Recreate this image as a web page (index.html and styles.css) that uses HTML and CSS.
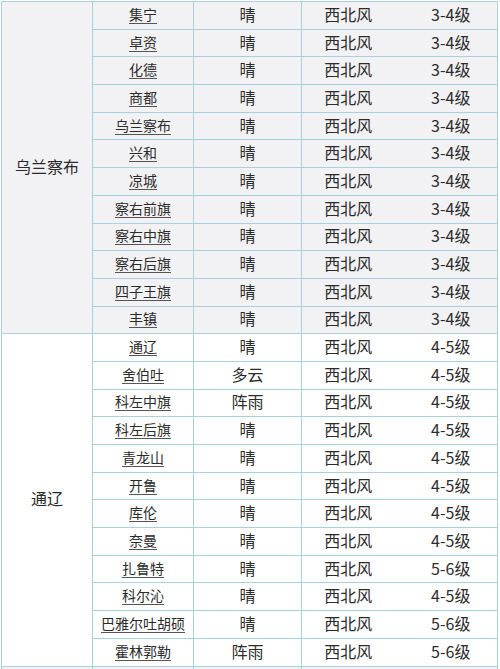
FILE: index.html
```html
<!DOCTYPE html>
<html lang="zh-CN">
<head>
<meta charset="utf-8">
<title>天气</title>
<link rel="stylesheet" href="styles.css">
</head>
<body>
<div class="table">
  <div class="group grey g1">乌兰察布</div>
  <div class="cell grey city"><a href="#">集宁</a></div><div class="cell grey">晴</div><div class="cell grey wind"><span>西北风</span><span>3-4级</span></div>
  <div class="cell grey city"><a href="#">卓资</a></div><div class="cell grey">晴</div><div class="cell grey wind"><span>西北风</span><span>3-4级</span></div>
  <div class="cell grey city"><a href="#">化德</a></div><div class="cell grey">晴</div><div class="cell grey wind"><span>西北风</span><span>3-4级</span></div>
  <div class="cell grey city"><a href="#">商都</a></div><div class="cell grey">晴</div><div class="cell grey wind"><span>西北风</span><span>3-4级</span></div>
  <div class="cell grey city"><a href="#">乌兰察布</a></div><div class="cell grey">晴</div><div class="cell grey wind"><span>西北风</span><span>3-4级</span></div>
  <div class="cell grey city"><a href="#">兴和</a></div><div class="cell grey">晴</div><div class="cell grey wind"><span>西北风</span><span>3-4级</span></div>
  <div class="cell grey city"><a href="#">凉城</a></div><div class="cell grey">晴</div><div class="cell grey wind"><span>西北风</span><span>3-4级</span></div>
  <div class="cell grey city"><a href="#">察右前旗</a></div><div class="cell grey">晴</div><div class="cell grey wind"><span>西北风</span><span>3-4级</span></div>
  <div class="cell grey city"><a href="#">察右中旗</a></div><div class="cell grey">晴</div><div class="cell grey wind"><span>西北风</span><span>3-4级</span></div>
  <div class="cell grey city"><a href="#">察右后旗</a></div><div class="cell grey">晴</div><div class="cell grey wind"><span>西北风</span><span>3-4级</span></div>
  <div class="cell grey city"><a href="#">四子王旗</a></div><div class="cell grey">晴</div><div class="cell grey wind"><span>西北风</span><span>3-4级</span></div>
  <div class="cell grey city"><a href="#">丰镇</a></div><div class="cell grey">晴</div><div class="cell grey wind"><span>西北风</span><span>3-4级</span></div>

  <div class="group white g2">通辽</div>
  <div class="cell white city"><a href="#">通辽</a></div><div class="cell white">晴</div><div class="cell white wind"><span>西北风</span><span>4-5级</span></div>
  <div class="cell white city"><a href="#">舍伯吐</a></div><div class="cell white">多云</div><div class="cell white wind"><span>西北风</span><span>4-5级</span></div>
  <div class="cell white city"><a href="#">科左中旗</a></div><div class="cell white">阵雨</div><div class="cell white wind"><span>西北风</span><span>4-5级</span></div>
  <div class="cell white city"><a href="#">科左后旗</a></div><div class="cell white">晴</div><div class="cell white wind"><span>西北风</span><span>4-5级</span></div>
  <div class="cell white city"><a href="#">青龙山</a></div><div class="cell white">晴</div><div class="cell white wind"><span>西北风</span><span>4-5级</span></div>
  <div class="cell white city"><a href="#">开鲁</a></div><div class="cell white">晴</div><div class="cell white wind"><span>西北风</span><span>4-5级</span></div>
  <div class="cell white city"><a href="#">库伦</a></div><div class="cell white">晴</div><div class="cell white wind"><span>西北风</span><span>4-5级</span></div>
  <div class="cell white city"><a href="#">奈曼</a></div><div class="cell white">晴</div><div class="cell white wind"><span>西北风</span><span>4-5级</span></div>
  <div class="cell white city"><a href="#">扎鲁特</a></div><div class="cell white">晴</div><div class="cell white wind"><span>西北风</span><span>5-6级</span></div>
  <div class="cell white city"><a href="#">科尔沁</a></div><div class="cell white">晴</div><div class="cell white wind"><span>西北风</span><span>4-5级</span></div>
  <div class="cell white city"><a href="#">巴雅尔吐胡硕</a></div><div class="cell white">晴</div><div class="cell white wind"><span>西北风</span><span>5-6级</span></div>
  <div class="cell white city"><a href="#">霍林郭勒</a></div><div class="cell white">阵雨</div><div class="cell white wind"><span>西北风</span><span>5-6级</span></div>

  <div class="cell grey"></div><div class="cell grey"></div><div class="cell grey"></div><div class="cell grey"></div>
</div>
</body>
</html>
```

FILE: styles.css
```css
html, body {
  margin: 0;
  padding: 0;
  background: #ffffff;
  overflow: hidden;
}

body {
  font-family: "Noto Sans CJK SC", "Noto Sans", sans-serif;
  color: #2b2b2b;
}

.table {
  display: grid;
  grid-template-columns: 90px 100px 107px 195px;
  grid-auto-rows: 26.7px;
  gap: 1px;
  padding: 1px;
  margin: 1px 0 0 1px;
  width: max-content;
  background: #a9d0e0;
}

.cell,
.group {
  display: flex;
  align-items: center;
  justify-content: center;
  font-size: 16px;
  line-height: 1;
  padding-bottom: 3px;
  box-sizing: border-box;
}

.grey { background: #f2f2f4; }
.white { background: #ffffff; }

.group { grid-column: 1; }
.g1 { grid-row: 1 / span 12; }
.g2 { grid-row: 13 / span 12; }

.city { font-size: 14px; }

.city a {
  color: #2b2b2b;
  text-decoration: underline;
  text-underline-offset: 3px;
  text-decoration-color: #555555;
}

.wind {
  justify-content: stretch;
}

.wind span {
  flex: 1;
  text-align: center;
}

.wind span + span {
  padding-left: 10px;
}
```
